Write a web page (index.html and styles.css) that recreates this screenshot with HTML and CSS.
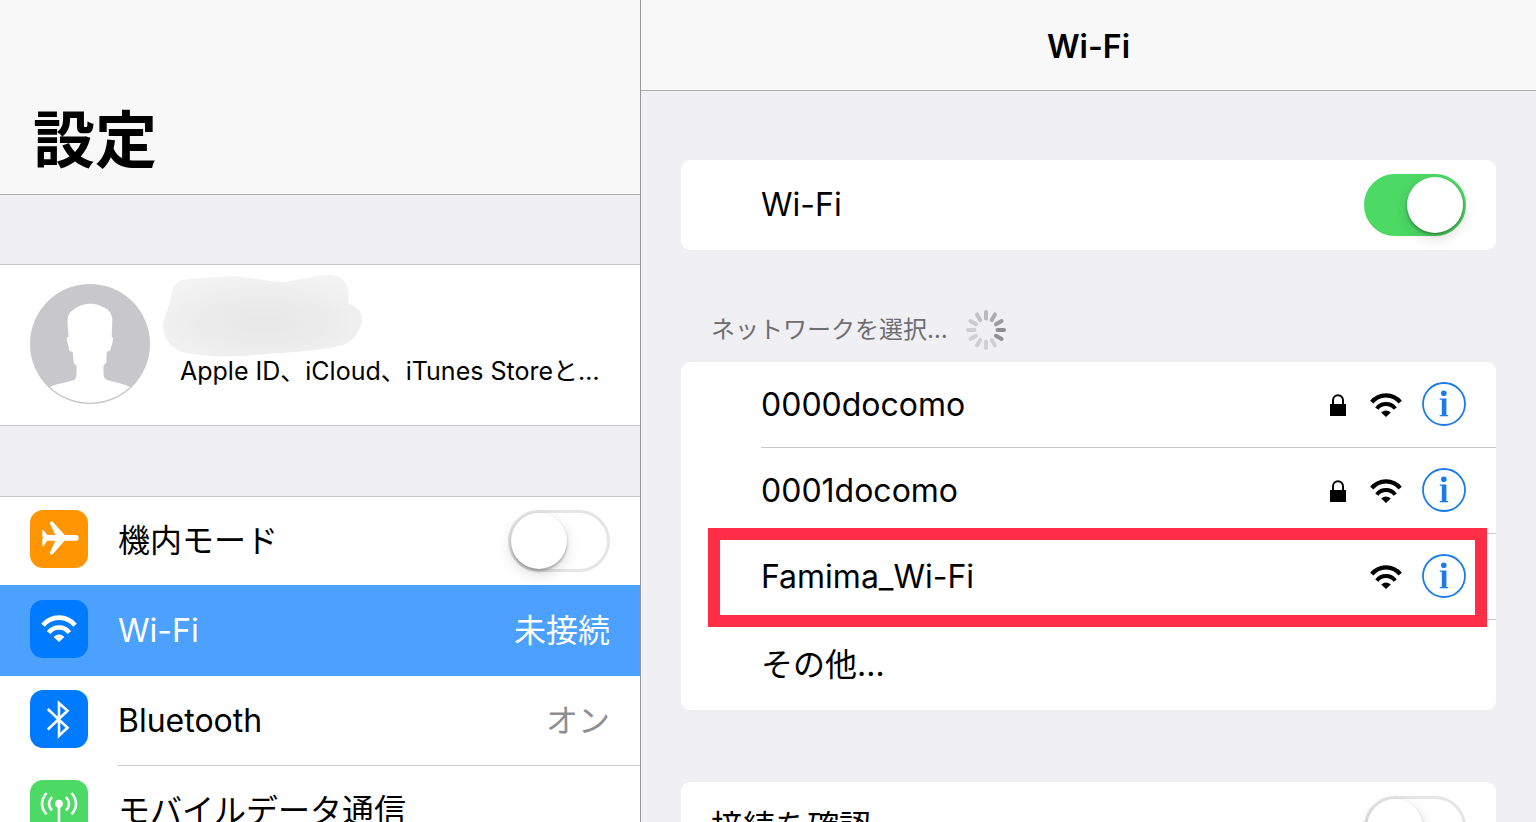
FILE: index.html
```html
<!DOCTYPE html>
<html lang="ja">
<head>
<meta charset="utf-8">
<meta name="viewport" content="width=device-width, initial-scale=1">
<title>設定</title>
<link rel="stylesheet" href="styles.css">
</head>
<body>
<svg class="defs" aria-hidden="true">
  <symbol id="wifi" viewBox="0 0 32 24">
    <path d="M1.800 9.100A18.200 18.200 0 0 1 30.200 9.100" fill="none" stroke="currentColor" stroke-width="4.200"/>
    <path d="M6.800 15.600A11.600 11.600 0 0 1 25.200 15.600" fill="none" stroke="currentColor" stroke-width="4"/>
    <path d="M11.200 19.600Q16 15.200 20.800 19.600L16 24Z" fill="currentColor"/>
  </symbol>
  <symbol id="lock" viewBox="0 0 16 22">
    <path d="M0 10H16V22H0Z" fill="currentColor"/>
    <path d="M3 11V6.200a5 5 0 0 1 10 0V11" fill="none" stroke="currentColor" stroke-width="2"/>
  </symbol>
  <symbol id="info" viewBox="0 0 44 44">
    <circle cx="22" cy="22" r="21" fill="none" stroke="currentColor" stroke-width="1.800"/>
    <circle cx="21.800" cy="11.200" r="2.800" fill="currentColor"/>
    <path d="M17.700 16.600H24.400V33H26.200V34.200H17.700V33H19.800V17.800H17.700Z" fill="currentColor"/>
  </symbol>
</svg>
<div class="layout">
  <aside class="sidebar">
    <header class="sidebar-header"><h1>設定</h1></header>
    <a class="profile" href="#account">
      <svg class="avatar" viewBox="0 0 120 120" aria-hidden="true">
        <circle cx="60" cy="60" r="60" fill="#c8c7cc"/>
        <path fill="#fff" d="M60.700 19.700C67 19.700 71 22 74 23.500C79 25 82.300 31 82.300 36L81.700 52.700L83 54.300C83 59 81 63 80 66.700L76.700 67.700L76.300 78.700Q73.500 80.500 73.300 83L73.700 91Q74 95 77 96C85 98 93 99.500 100 103A59 59 0 0 1 20 103C27 99.500 36 98.500 44 96Q46.300 94 46.300 92L46.700 82Q44 80.500 43.700 78L42.700 68L39.300 66.700C39 62 36.500 59 36.700 53.500L38.500 53L37.500 39C37.500 34 38 29 42.500 26.500C48 22 53 19.700 60.700 19.700Z"/>
      </svg>
      <span class="profile-body">
        <svg class="profile-name" viewBox="0 0 200 84" aria-hidden="true">
          <defs>
            <radialGradient id="smudge" cx="50%" cy="58%" r="60%">
              <stop offset="0" stop-color="#e7e7e8"/>
              <stop offset=".55" stop-color="#ececed"/>
              <stop offset="1" stop-color="#f3f3f4"/>
            </radialGradient>
          </defs>
          <path fill="url(#smudge)" d="M20 7C35 5 55 4 70 3C88 4 105 9 120 9C134 8 150 2 166 2C182 2 188 14 185 30C193 33 201 40 199 49C196 60 188 70 180 72C158 78 118 80 90 82C62 85 32 83 16 78C6 74 -1 60 0 53C1 43 6 36 8 24C9 15 12 8 20 7Z"/>
        </svg>
        <span class="profile-detail">Apple ID、iCloud、iTunes Storeと…</span>
      </span>
    </a>
    <ul class="menu">
      <li class="menu-row menu-row-first">
        <svg class="tile tile-orange" viewBox="0 0 58 58" aria-hidden="true">
          <path fill="#fff" d="M12.300 20H13.600L17.300 25.100H25.300L19.700 13Q20 10.800 22.600 11.700L34.700 25.100H46Q48.700 25.400 48.700 27.900Q48.700 30.400 46 30.700H34.700L22.600 44.300Q20 45.200 19.700 43L25.300 30.700H17.300L13.600 36H12.300V29L13.300 28L12.300 27Z"/>
        </svg>
        <label class="menu-label" for="airplane">機内モード</label>
        <input class="toggle" type="checkbox" id="airplane">
      </li>
      <li>
        <a class="menu-row menu-row-active" href="#wifi-settings" aria-current="page">
          <span class="tile tile-blue"><svg class="tile-wifi" aria-hidden="true"><use href="#wifi"/></svg></span>
          <span class="menu-label">Wi-Fi</span>
          <span class="menu-value">未接続</span>
        </a>
      </li>
      <li>
        <a class="menu-row menu-row-ruled" href="#bluetooth">
          <svg class="tile tile-blue" viewBox="0 0 58 58" aria-hidden="true">
            <path fill="none" stroke="#fff" stroke-width="2.600" d="M17.800 19L37.500 37.700L29 45.800V13.200L37.500 20.700L17.800 39.500"/>
          </svg>
          <span class="menu-label">Bluetooth</span>
          <span class="menu-value">オン</span>
        </a>
      </li>
      <li>
        <a class="menu-row" href="#cellular">
          <svg class="tile tile-green" viewBox="0 0 58 58" aria-hidden="true">
            <circle cx="29" cy="23.700" r="3.900" fill="#fff"/>
            <path fill="none" stroke="#fff" stroke-width="2.600" d="M29 24V50M22 17Q16 23.700 22 30.400M36 17Q42 23.700 36 30.400M16.500 13Q7.500 23.700 16.500 34.400M41.500 13Q50.500 23.700 41.500 34.400"/>
          </svg>
          <span class="menu-label">モバイルデータ通信</span>
        </a>
      </li>
    </ul>
  </aside>
  <main class="detail">
    <header class="detail-header"><h2>Wi-Fi</h2></header>
    <div class="detail-body">
      <section class="card switch-row switch-row-inset">
        <label for="wifi-on">Wi-Fi</label>
        <input class="toggle" type="checkbox" id="wifi-on" checked>
      </section>
      <h3 class="section-title">
        ネットワークを選択…
        <svg class="spinner" viewBox="-20 -20 40 40" aria-hidden="true" stroke-width="4" stroke-linecap="round">
          <path d="M0 -18V-11.500" stroke="#b9b9be"/>
          <path d="M0 -18V-11.500" stroke="#abaab0" transform="rotate(30)"/>
          <path d="M0 -18V-11.500" stroke="#9b9aa0" transform="rotate(60)"/>
          <path d="M0 -18V-11.500" stroke="#8f8e94" transform="rotate(90)"/>
          <path d="M0 -18V-11.500" stroke="#929197" transform="rotate(120)"/>
          <path d="M0 -18V-11.500" stroke="#d0d0d4" transform="rotate(150)"/>
          <path d="M0 -18V-11.500" stroke="#d0d0d4" transform="rotate(180)"/>
          <path d="M0 -18V-11.500" stroke="#d0d0d4" transform="rotate(210)"/>
          <path d="M0 -18V-11.500" stroke="#d0d0d4" transform="rotate(240)"/>
          <path d="M0 -18V-11.500" stroke="#cecdd2" transform="rotate(270)"/>
          <path d="M0 -18V-11.500" stroke="#cac9ce" transform="rotate(300)"/>
          <path d="M0 -18V-11.500" stroke="#c2c1c7" transform="rotate(330)"/>
        </svg>
      </h3>
      <ul class="card networks">
        <li class="network">
          <div class="network-line">
            <span class="network-name">0000docomo</span>
            <svg class="icon-lock" aria-hidden="true"><use href="#lock"/></svg>
            <svg class="icon-wifi" aria-hidden="true"><use href="#wifi"/></svg>
            <button class="info" type="button" aria-label="0000docomoの詳細"><svg aria-hidden="true"><use href="#info"/></svg></button>
          </div>
        </li>
        <li class="network">
          <div class="network-line">
            <span class="network-name">0001docomo</span>
            <svg class="icon-lock" aria-hidden="true"><use href="#lock"/></svg>
            <svg class="icon-wifi" aria-hidden="true"><use href="#wifi"/></svg>
            <button class="info" type="button" aria-label="0001docomoの詳細"><svg aria-hidden="true"><use href="#info"/></svg></button>
          </div>
        </li>
        <li class="network network-marked">
          <div class="network-line">
            <span class="network-name">Famima_Wi-Fi</span>
            <svg class="icon-wifi" aria-hidden="true"><use href="#wifi"/></svg>
            <button class="info" type="button" aria-label="Famima_Wi-Fiの詳細"><svg aria-hidden="true"><use href="#info"/></svg></button>
          </div>
        </li>
        <li class="network">
          <a class="network-other" href="#other">その他…</a>
        </li>
      </ul>
      <section class="card switch-row confirm">
        <label for="confirm">接続を確認</label>
        <input class="toggle" type="checkbox" id="confirm">
      </section>
    </div>
  </main>
</div>
</body>
</html>
```

FILE: styles.css
```css
* {
  box-sizing: border-box;
}

body {
  margin: 0;
  background: #efeff4;
  color: #000;
  font-family: Inter, "Noto Sans CJK JP", sans-serif;
  font-size: 32px;
  line-height: 40px;
}

h1,
h2,
h3,
ul {
  margin: 0;
  padding: 0;
}

ul {
  list-style: none;
}

a {
  color: inherit;
  text-decoration: none;
}

svg {
  display: block;
  flex: none;
}

.defs {
  position: absolute;
  width: 0;
  height: 0;
}

.layout {
  display: grid;
  grid-template-columns: 5fr 7fr;
  height: 100vh;
  overflow: hidden;
}

.sidebar,
.detail {
  min-width: 0;
  overflow: hidden;
}

.detail {
  border-left: 1px solid #97979c;
}

/* Sidebar */

.sidebar-header {
  padding: 96px 33px 8px;
  border-bottom: 1px solid #acabb1;
  background: #f8f8f8;
}

.sidebar-header h1 {
  font-size: 62px;
  font-weight: 700;
  line-height: 90px;
}

.profile {
  display: flex;
  gap: 13px;
  margin-top: 69px;
  padding: 8px 30px 21px;
  border-top: 1px solid #c8c7cc;
  border-bottom: 1px solid #c8c7cc;
  background: #fff;
}

.avatar {
  width: 120px;
  height: 120px;
  margin-top: 11px;
}

.profile-body {
  min-width: 0;
}

.profile-name {
  width: 200px;
  height: 84px;
}

.profile-detail {
  display: block;
  padding-left: 17px;
  font-size: 25px;
  line-height: 28px;
  white-space: nowrap;
}

.menu {
  margin-top: 70px;
  border-top: 1px solid #c8c7cc;
  background: #fff;
}

.menu-row {
  display: flex;
  align-items: center;
  gap: 30px;
  height: 90px;
  padding: 0 30px;
}

.menu-row-first {
  height: 88px;
}

.menu-row-active {
  height: 91px;
  background: #4ca1ff;
  color: #fff;
}

.menu-row-ruled {
  background: linear-gradient(#c8c7cc, #c8c7cc) 118px 100% / 100% 1px no-repeat;
}

.menu-label {
  flex: 1;
}

.menu-value {
  color: #8e8e93;
}

.menu-row-active .menu-value {
  color: inherit;
}

.tile {
  flex: none;
  display: grid;
  place-items: center;
  width: 58px;
  height: 58px;
  margin-bottom: 4px;
  border-radius: 13px;
}

.tile-orange {
  background: #ff9500;
}

.tile-blue {
  background: #007aff;
}

.tile-green {
  background: #4cd964;
}

.tile-wifi {
  width: 36px;
  height: 27px;
}

/* Switch */

.toggle {
  appearance: none;
  flex: none;
  width: 102px;
  height: 62px;
  margin: 0;
  border: 3px solid #e5e5e5;
  border-radius: 31px;
  background: #fff;
}

.toggle::before {
  content: "";
  display: block;
  width: 56px;
  height: 56px;
  border-radius: 50%;
  background: #fff;
  box-shadow: 0 2px 3px rgba(0, 0, 0, 0.3), 0 5px 14px rgba(0, 0, 0, 0.15);
}

.toggle:checked {
  border-color: #4cd964;
  background: #4cd964;
}

.toggle:checked::before {
  margin-left: 40px;
}

/* Detail pane */

.detail-header {
  padding: 27px 0 23px;
  border-bottom: 1px solid #acabb1;
  background: #f8f8f8;
  text-align: center;
}

.detail-header h2 {
  font-size: 32px;
  font-weight: 600;
  line-height: 40px;
}

.detail-body {
  padding: 69px 40px 0;
}

.card {
  border-radius: 9px;
  background: #fff;
}

.switch-row {
  display: flex;
  align-items: center;
  justify-content: space-between;
  height: 90px;
  padding: 0 30px;
}

.switch-row-inset {
  padding-left: 80px;
}

.section-title {
  display: flex;
  align-items: center;
  gap: 18px;
  margin-top: 60px;
  padding: 0 30px 12px;
  color: #6d6d72;
  font-size: 24px;
  font-weight: 400;
}

.spinner {
  width: 40px;
  height: 40px;
}

.network {
  padding-left: 80px;
}

.network-line {
  display: flex;
  align-items: center;
  height: 86px;
  padding-right: 30px;
  border-bottom: 1px solid #c8c7cc;
}

.network-name {
  flex: 1;
}

.network-other {
  display: flex;
  align-items: center;
  height: 90px;
}

.network-marked {
  position: relative;
}

.network-marked::after {
  content: "";
  position: absolute;
  inset: -6px 9px -7px 27px;
  border: 12px solid #ff2d46;
  pointer-events: none;
}

.icon-lock {
  width: 16px;
  height: 22px;
  margin-right: 24px;
}

.icon-wifi {
  width: 32px;
  height: 24px;
  margin-right: 20px;
}

.info {
  width: 44px;
  height: 44px;
  margin-bottom: 2px;
  padding: 0;
  border: 0;
  background: none;
  color: #1a7cea;
}

.info svg {
  width: 44px;
  height: 44px;
}

.confirm {
  margin-top: 72px;
}
```
